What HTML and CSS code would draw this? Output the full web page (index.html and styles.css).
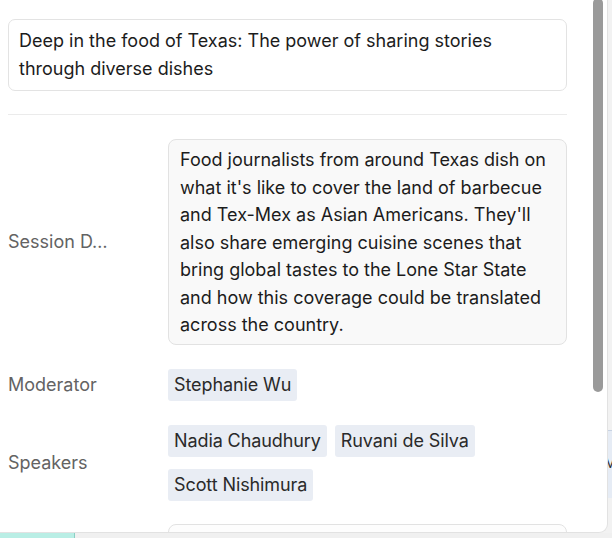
FILE: index.html
```html
<!DOCTYPE html>
<html>
<head>
<meta charset="utf-8">
<link rel="stylesheet" href="styles.css">
</head>
<body>
<div class="screen">
  <div class="main">
    <div class="panel">
      <div class="content">
        <div class="title-box">Deep in the food of Texas: The power of sharing stories through diverse dishes</div>
        <div class="divider"></div>
        <div class="field field-desc">
          <div class="label">Session D…</div>
          <div class="value desc-box">Food journalists from around Texas dish on what it's like to cover the land of barbecue and Tex-Mex as Asian Americans. They'll also share emerging cuisine scenes that bring global tastes to the Lone Star State and how this coverage could be translated across the country.</div>
        </div>
        <div class="field field-mod">
          <div class="label">Moderator</div>
          <div class="value tags"><span class="tag">Stephanie Wu</span></div>
        </div>
        <div class="field field-spk">
          <div class="label">Speakers</div>
          <div class="value tags"><span class="tag">Nadia Chaudhury</span><span class="tag">Ruvani de Silva</span><span class="tag">Scott Nishimura</span></div>
        </div>
        <div class="field field-next">
          <div class="label"></div>
          <div class="value next-box"></div>
        </div>
      </div>
      <div class="scrollbar"><div class="thumb"></div></div>
    </div>
    <div class="side">
      <div class="side-card">
        <span class="frag">:</span>
        <span class="frag">M</span>
      </div>
    </div>
  </div>
  <div class="bottom">
    <div class="teal"></div>
  </div>
</div>
</body>
</html>
```
FILE: styles.css
```css
* { box-sizing: border-box; }
html, body { margin: 0; padding: 0; }
body {
  width: 612px;
  height: 538px;
  overflow: hidden;
  background: #f2f2f2;
  font-family: Inter, "Noto Sans", "Liberation Sans", sans-serif;
  color: #1f1f1f;
}
.screen {
  display: flex;
  flex-direction: column;
  height: 538px;
}
.main {
  display: flex;
  height: 533px;
  flex: none;
}
.panel {
  width: 608px;
  height: 533px;
  flex: none;
  background: #fff;
  border-right: 1px solid #e2e2e2;
  border-bottom: 1px solid #e2e2e2;
  border-bottom-right-radius: 9px;
  display: flex;
  overflow: hidden;
  position: relative;
  z-index: 1;
}
.content {
  width: 575px;
  flex: none;
  padding: 19px 0 0 8px;
  display: flex;
  flex-direction: column;
}
.content > * { flex: none; }
.title-box {
  width: 559px;
  border: 1px solid #e3e3e3;
  border-radius: 7px;
  padding: 7px 10px;
  font-size: 18px;
  line-height: 28px;
  color: #1c1c1c;
}
.divider {
  width: 559px;
  height: 1px;
  background: #ebebeb;
  margin: 23px 0 24px;
}
.field {
  display: flex;
  align-items: center;
}
.label {
  width: 160px;
  flex: none;
  font-size: 18px;
  color: #636363;
  white-space: nowrap;
}
.value { width: 399px; }
.desc-box {
  background: #f9f9f9;
  border: 1px solid #e2e2e2;
  border-radius: 8px;
  padding: 6px 11px 5px;
  font-size: 18px;
  line-height: 27.5px;
  color: #1c1c1c;
}
.tags {
  display: flex;
  flex-wrap: wrap;
  gap: 12px 8px;
}
.tag {
  background: #e9edf4;
  border-radius: 3px;
  padding: 0 6px;
  height: 32px;
  line-height: 32px;
  font-size: 18px;
  letter-spacing: -0.1px;
  color: #2a2a2a;
}
.field-mod { margin-top: 24px; }
.field-spk { margin-top: 24px; }
.field-next { margin-top: 23px; align-items: flex-start; }
.next-box {
  height: 30px;
  border: 1px solid #e2e2e2;
  border-radius: 8px;
  background: #fdfdfd;
}
.scrollbar {
  width: 32px;
  flex: none;
  display: flex;
  justify-content: flex-start;
  padding-left: 18px;
}
.thumb {
  width: 10px;
  height: 394px;
  margin-top: -2px;
  background: #9a9a9a;
  border-radius: 5px;
}
.side {
  flex: 1;
  padding-top: 430px;
}
.side-card {
  height: 68px;
  background: #e6ecf5;
  border-top: 1px solid #c8d3e3;
  display: flex;
  flex-direction: column;
  font-size: 14px;
  color: #333;
  overflow: hidden;
  padding-top: 2px;
  line-height: 20px;
}
.frag { margin-left: -4px; }
.bottom {
  flex: 1;
  display: flex;
  background: #f0f0f0;
}
.teal {
  width: 75px;
  background: #b9eee5;
  border-right: 1px solid #8ccfc4;
}
```
